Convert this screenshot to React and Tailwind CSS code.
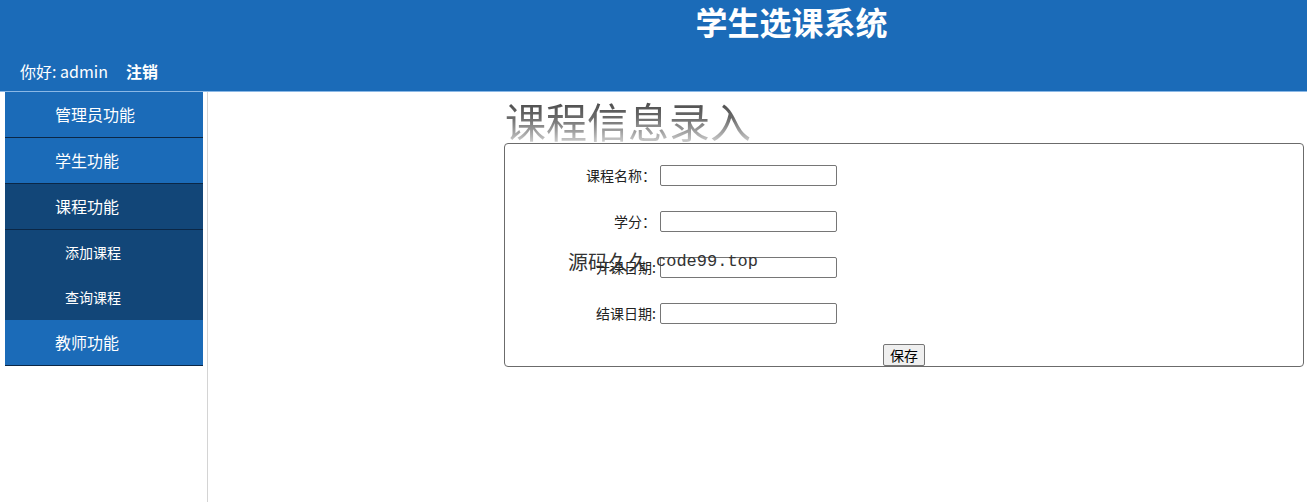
const cjk = { fontFamily: '"Noto Sans CJK SC", "Liberation Sans", sans-serif' }

const fields = [
  { label: '课程名称：' },
  { label: '学分：' },
  { label: '开课日期:' },
  { label: '结课日期:' },
]

function Sidebar() {
  return (
    <aside className="w-[208px] shrink-0 border-r border-[#d4d4d4]">
      <nav className="ml-[5px] w-[198px] text-white">
        <div className="h-[46px] bg-[#1b6bb8] border-b border-[#0b2746] flex items-center pl-[50px] pb-[2px] text-[16px]">管理员功能</div>
        <div className="h-[46px] bg-[#1b6bb8] border-b border-[#0b2746] flex items-center pl-[50px] pb-[2px] text-[16px]">学生功能</div>
        <div className="h-[46px] bg-[#124678] border-b border-[#0b2746] flex items-center pl-[50px] pb-[2px] text-[16px]">课程功能</div>
        <div className="bg-[#124678]">
          <div className="h-[45px] flex items-center pl-[60px] text-[14px]">添加课程</div>
          <div className="h-[45px] flex items-center pl-[60px] text-[14px]">查询课程</div>
        </div>
        <div className="h-[46px] bg-[#1b6bb8] border-b border-[#0b2746] flex items-center pl-[50px] pb-[2px] text-[16px]">教师功能</div>
      </nav>
    </aside>
  )
}

export default function App() {
  return (
    <div className="min-h-[502px] bg-white flex flex-col" style={cjk}>
      {/* header */}
      <header className="h-[92px] bg-[#1b6bb8] border-b border-[#8ab8e6] text-white">
        <div className="pl-[276px] text-center text-[32px] font-bold leading-[42px]">学生选课系统</div>
        <div className="mt-[17px] pl-[20px] flex items-center h-[24px] text-[16px] leading-[24px]">
          <span>你好: admin</span>
          <span className="ml-[18px] font-bold">注销</span>
        </div>
      </header>

      <div className="flex flex-1 min-h-[410px]">
        <Sidebar />

        <main className="relative flex-1 pl-[296px] pr-[3px]">
          <h1 className="h-[51px] pt-[6px] text-[41px] leading-[44px] font-normal bg-gradient-to-b from-[#3a3a3a] via-[#6a6a6a] to-[#d0d0d0] bg-clip-text text-transparent w-fit pl-[1px]">
            课程信息录入
          </h1>
          <div className="w-[800px] border border-[#6b6b6b] rounded-[4px] pt-[8px] text-[14px] text-[#222]">
            {fields.map(f => (
              <div key={f.label} className="h-[46px] flex items-center">
                <label className="w-[151px] text-right">{f.label}</label>
                <input className="ml-[4px] w-[177px] h-[21px] border border-[#767676] rounded-[2px] bg-white" />
              </div>
            ))}
            <div className="mt-[8px] flex justify-center">
              <button className="h-[22px] w-[42px] text-[14px] leading-[18px] bg-[#efefef] border border-[#767676] rounded-[2px] text-black">保存</button>
            </div>
          </div>

          {/* watermark */}
          <div className="absolute left-[360px] top-[156px] h-[28px] text-[#333] flex items-center pointer-events-none">
            <span className="text-[20px]">源码久久</span>
            <span className="ml-[8px] text-[17px]" style={{ fontFamily: '"Liberation Mono", monospace' }}>code99.top</span>
          </div>
        </main>
      </div>
    </div>
  )
}
